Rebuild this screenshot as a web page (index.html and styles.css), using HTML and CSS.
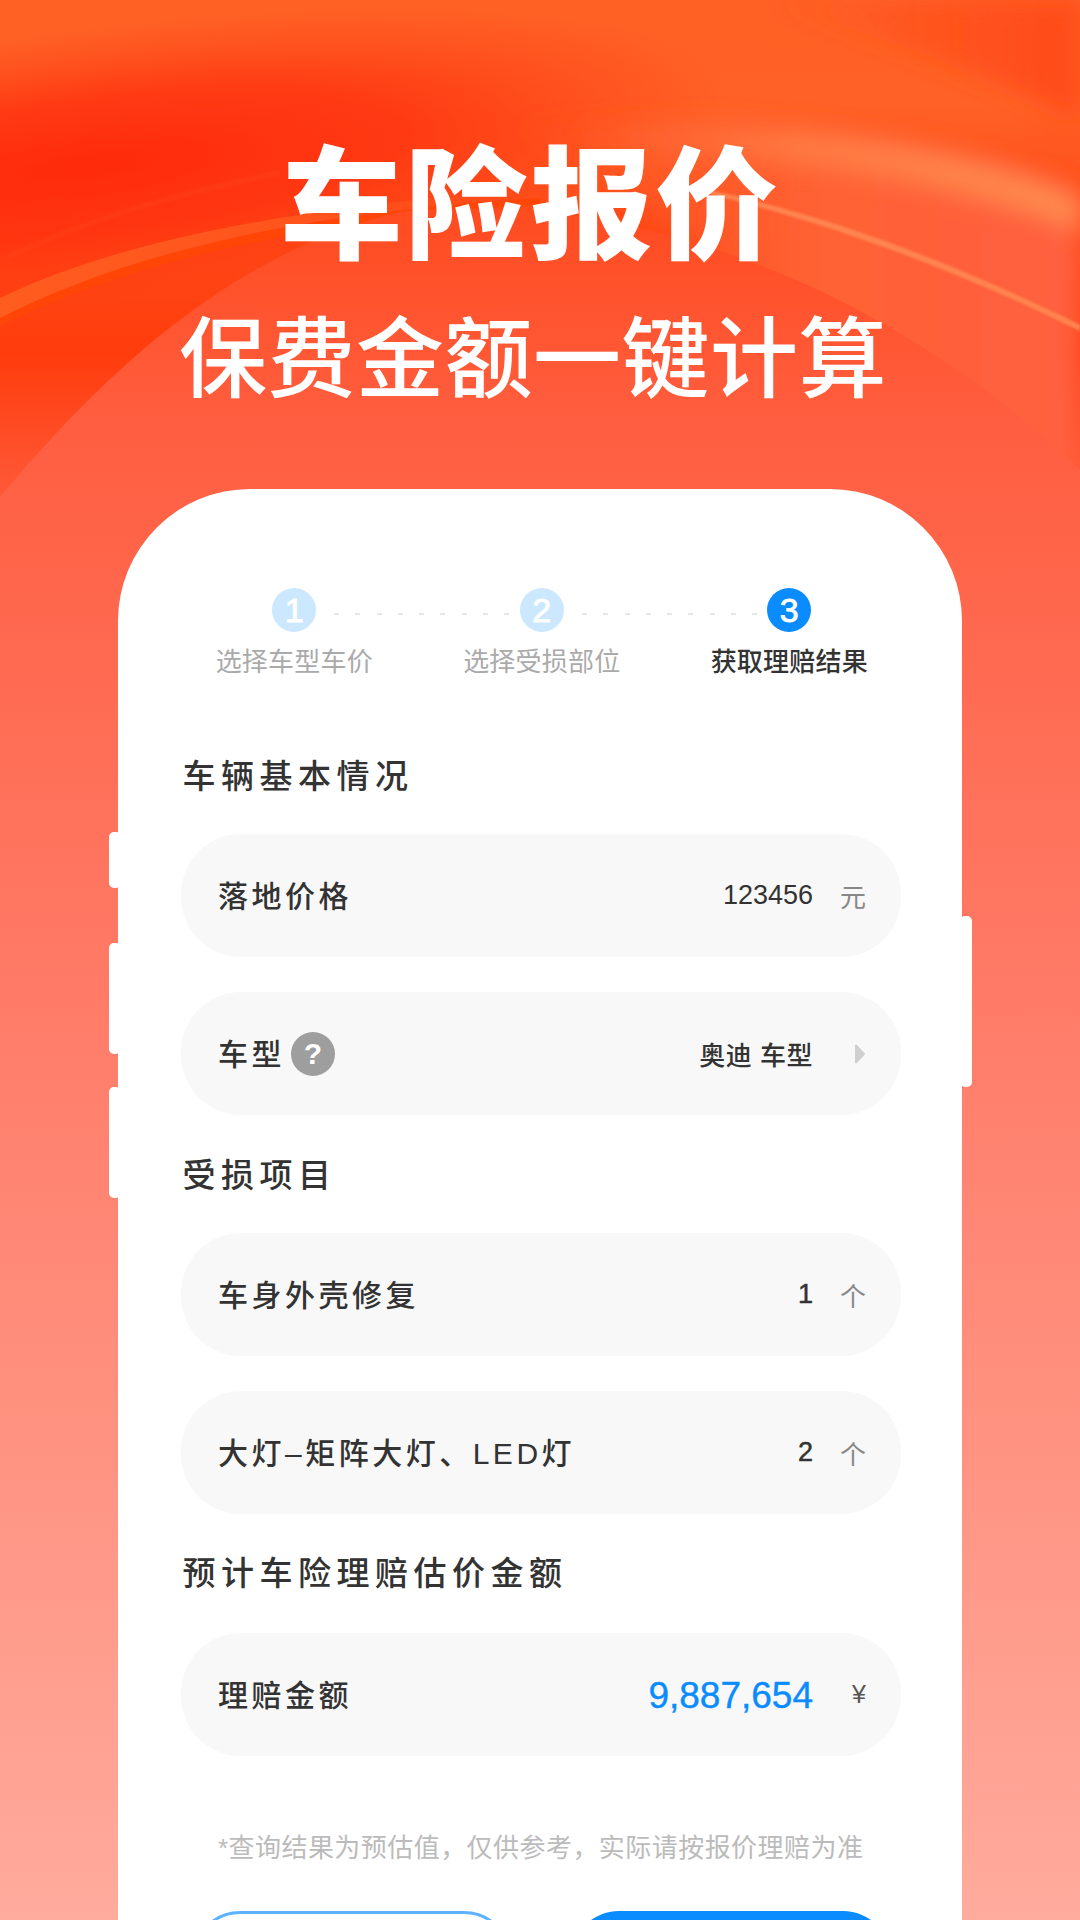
FILE: index.html
```html
<!DOCTYPE html>
<html lang="zh-CN">
<head>
<meta charset="utf-8">
<title>车险报价</title>
<link rel="stylesheet" href="styles.css">
</head>
<body>
<div class="page">
  <svg class="backdrop" viewBox="0 0 1080 1920" preserveAspectRatio="none" aria-hidden="true">
    <defs>
      <linearGradient id="top" x1="0" y1="0" x2="0" y2="520" gradientUnits="userSpaceOnUse">
        <stop offset="0" stop-color="#ff6024"/>
        <stop offset=".2" stop-color="#ff6126"/>
        <stop offset=".42" stop-color="#ff4a18"/>
        <stop offset=".68" stop-color="#ff3c0c"/>
        <stop offset="1" stop-color="#ff5e40"/>
      </linearGradient>
      <radialGradient id="red" cx="0" cy="0" r="1" gradientUnits="userSpaceOnUse" gradientTransform="translate(90 165) rotate(-7) scale(640 135)">
        <stop offset="0" stop-color="#ff2a0a"/>
        <stop offset=".5" stop-color="#ff2f0e" stop-opacity=".75"/>
        <stop offset="1" stop-color="#ff3a10" stop-opacity="0"/>
      </radialGradient>
      <linearGradient id="corner" x1="760" y1="0" x2="1080" y2="0" gradientUnits="userSpaceOnUse">
        <stop offset="0" stop-color="#ff4a18" stop-opacity="0"/>
        <stop offset="1" stop-color="#ff4a18"/>
      </linearGradient>
      <linearGradient id="sheen" x1="560" y1="0" x2="1080" y2="0" gradientUnits="userSpaceOnUse">
        <stop offset="0" stop-color="#ff6a38" stop-opacity="0"/>
        <stop offset=".45" stop-color="#ff7a42"/>
        <stop offset="1" stop-color="#ff8c50"/>
      </linearGradient>
      <linearGradient id="under" x1="560" y1="0" x2="1080" y2="0" gradientUnits="userSpaceOnUse">
        <stop offset="0" stop-color="#ff5a28" stop-opacity=".2"/>
        <stop offset=".5" stop-color="#ff6234"/>
        <stop offset="1" stop-color="#ff6040"/>
      </linearGradient>
      <linearGradient id="band" x1="0" y1="0" x2="540" y2="0" gradientUnits="userSpaceOnUse">
        <stop offset="0" stop-color="#ff5c20"/>
        <stop offset=".6" stop-color="#ff541c"/>
        <stop offset="1" stop-color="#ff541c" stop-opacity="0"/>
      </linearGradient>
      <linearGradient id="dome" x1="0" y1="200" x2="0" y2="1920" gradientUnits="userSpaceOnUse">
        <stop offset="0" stop-color="#ff4a1e"/>
        <stop offset=".13" stop-color="#ff5e40"/>
        <stop offset=".45" stop-color="#ff7a66"/>
        <stop offset=".75" stop-color="#ff9584"/>
        <stop offset="1" stop-color="#ffab9d"/>
      </linearGradient>
      <filter id="soft" x="-20%" y="-40%" width="140%" height="180%"><feGaussianBlur stdDeviation="12"/></filter>
      <filter id="softer" x="-5%" y="-20%" width="110%" height="140%"><feGaussianBlur stdDeviation="1.2"/></filter>
    </defs>
    <rect width="1080" height="1920" fill="url(#top)"/>
    <rect width="1080" height="360" fill="url(#red)"/>
    <path d="M760 0H1080V120C980 70 860 30 760 0Z" fill="url(#corner)" filter="url(#soft)"/>
    <path d="M520 128C700 108 950 130 1080 195V560L640 200Z" fill="url(#under)" filter="url(#soft)"/>
    <path d="M560 128C750 116 950 140 1080 198V232C960 185 780 150 620 155Z" fill="url(#sheen)" filter="url(#soft)"/>
    <path d="M700 188C830 215 960 265 1080 325V331C960 272 830 222 700 192Z" fill="#ff8450" filter="url(#softer)"/>
    <path d="M0 258C90 215 180 190 280 170L280 176C180 196 90 220 0 264Z" fill="#ff4a1e" opacity=".3" filter="url(#softer)"/>
    <path d="M0 318C130 250 300 215 540 198V204C300 222 130 262 0 326Z" fill="#ff4606"/>
    <path d="M0 298C120 240 300 205 540 190V197C300 213 130 252 0 318Z" fill="url(#band)"/>
    <path d="M0 497C90 390 220 255 400 212C610 190 870 270 1080 470V1920H0Z" fill="url(#dome)"/>
  </svg>

  <header class="hero">
    <h1 class="hero-title">车险报价</h1>
    <p class="hero-sub">保费金额一键计算</p>
  </header>

  <main class="card">
    <span class="tab tab-a"></span>
    <span class="tab tab-b"></span>
    <span class="tab tab-c"></span>
    <span class="tab tab-d"></span>

    <ol class="stepper">
      <li class="step"><span class="dot">1</span><span class="step-label">选择车型车价</span></li>
      <li class="step"><span class="link"></span><span class="dot">2</span><span class="step-label">选择受损部位</span></li>
      <li class="step is-current"><span class="link"></span><span class="dot">3</span><span class="step-label">获取理赔结果</span></li>
    </ol>

    <h2 class="section section-first">车辆基本情况</h2>
    <div class="row">
      <span class="row-label">落地价格</span>
      <span class="row-value">123456</span>
      <span class="row-unit">元</span>
    </div>
    <div class="row row-next">
      <span class="row-label">车型</span>
      <span class="help">?</span>
      <span class="row-value row-value-cjk">奥迪 车型</span>
      <span class="row-unit">
        <svg class="caret" viewBox="0 0 10 18" aria-hidden="true"><path d="M1.5 1.5 8.5 9 1.5 16.500Z" fill="#cfcfcf" stroke="#cfcfcf" stroke-width="2" stroke-linejoin="round"/></svg>
      </span>
    </div>

    <h2 class="section section-damage">受损项目</h2>
    <div class="row">
      <span class="row-label">车身外壳修复</span>
      <span class="row-value row-value-count">1</span>
      <span class="row-unit">个</span>
    </div>
    <div class="row row-next">
      <span class="row-label">大灯–矩阵大灯、LED灯</span>
      <span class="row-value row-value-count">2</span>
      <span class="row-unit">个</span>
    </div>

    <h2 class="section section-estimate">预计车险理赔估价金额</h2>
    <div class="row">
      <span class="row-label">理赔金额</span>
      <span class="row-value row-value-big">9,887,654</span>
      <span class="row-unit row-unit-yen">¥</span>
    </div>

    <p class="note">*查询结果为预估值，仅供参考，实际请按报价理赔为准</p>

    <div class="actions">
      <span class="btn btn-ghost"></span>
      <span class="btn btn-solid"></span>
    </div>
  </main>
</div>
</body>
</html>
```
FILE: styles.css
```css
* { box-sizing: border-box; }
html, body { margin: 0; padding: 0; }
body {
  font-family: "Liberation Sans", "Noto Sans CJK SC", sans-serif;
  color: #333;
}
.page {
  position: relative;
  width: 1080px;
  height: 1920px;
  overflow: hidden;
  background: #ff7a66;
}
.backdrop {
  position: absolute;
  left: 0;
  top: 0;
  width: 1080px;
  height: 1920px;
}
.hero {
  position: relative;
  padding-top: 142px;
  text-align: center;
  color: #fff;
}
.hero-title {
  margin: 0;
  padding-right: 19px;
  font-size: 122px;
  line-height: 130px;
  letter-spacing: 3px;
  font-weight: 900;
}
.hero-sub {
  margin: 40px 0 0;
  padding-right: 14px;
  font-size: 88px;
  line-height: 96px;
  letter-spacing: .5px;
  font-weight: 500;
}
.card {
  position: relative;
  width: 844px;
  height: 1500px;
  margin: 81px 0 0 118px;
  padding: 99px 61px 0 63px;
  background: #fff;
  border-radius: 132px 132px 0 0;
}
.tab {
  position: absolute;
  width: 12px;
  background: #fff;
  border-radius: 5px;
}
.tab-a { left: -9px; top: 343px; height: 56px; }
.tab-b { left: -9px; top: 454px; height: 111px; }
.tab-c { left: -9px; top: 598px; height: 111px; }
.tab-d { right: -10px; top: 427px; height: 171px; }

.stepper {
  list-style: none;
  display: grid;
  grid-template-columns: repeat(3, 247.500px);
  margin: 0 0 0 -10.500px;
  padding: 0;
}
.step {
  position: relative;
  display: flex;
  flex-direction: column;
  align-items: center;
}
.dot {
  width: 44px;
  height: 44px;
  border-radius: 50%;
  background: #cce8ff;
  color: #fff;
  font-size: 34px;
  line-height: 44px;
  text-align: center;
  -webkit-text-stroke: .8px #fff;
}
.is-current .dot { background: #0a8cff; }
.link {
  position: absolute;
  left: -84px;
  top: 25px;
  width: 175px;
  height: 2px;
  background: repeating-linear-gradient(90deg, #e6e6e6 0 5px, transparent 5px 21.300px);
}
.step-label {
  margin-top: 12px;
  font-size: 26px;
  line-height: 36px;
  letter-spacing: .2px;
  color: #aaa;
}
.is-current .step-label { color: #333; font-weight: 500; }

.section {
  margin: 0;
  padding-left: 1.500px;
  font-size: 33px;
  line-height: 40px;
  letter-spacing: 5.500px;
  font-weight: 500;
  color: #333;
}
.section-first { margin: 77px 0 37px; }
.section-damage { margin: 41px 0 37px; }
.section-estimate { margin: 40px 0 39px; }

.row {
  display: flex;
  align-items: center;
  height: 123px;
  padding: 0 35px 0 37px;
  background: #f8f8f8;
  border-radius: 60px;
}
.row-next { margin-top: 35px; }
.row-label {
  padding-bottom: 3px;
  font-size: 30px;
  letter-spacing: 3.500px;
  font-weight: 500;
  color: #333;
}
.help {
  width: 44px;
  height: 44px;
  margin-left: 6px;
  border-radius: 50%;
  background: #9e9e9e;
  color: #fff;
  font-size: 30px;
  line-height: 44px;
  text-align: center;
  font-weight: 700;
}
.row-value {
  margin-left: auto;
  font-size: 27px;
  color: #333;
}
.row-value-cjk { font-size: 26px; letter-spacing: .5px; font-weight: 500; }
.row-value-count { -webkit-text-stroke: .5px #333; }
.row-value-big { padding-top: 2px; font-size: 37px; color: #0a8cff; -webkit-text-stroke: .4px #0a8cff; }
.row-unit {
  display: flex;
  justify-content: flex-end;
  align-items: center;
  width: 26px;
  margin-left: 27px;
  font-size: 26px;
  color: #888;
}
.row-unit-yen { font-size: 25px; color: #555; }
.caret { width: 12px; height: 20px; }

.note {
  margin: 74px 0 0;
  padding-left: 37px;
  font-size: 26px;
  line-height: 36px;
  letter-spacing: .45px;
  color: #bbb;
}
.actions {
  display: flex;
  justify-content: space-between;
  margin: 45px 10px 0 11px;
}
.btn {
  display: block;
  width: 320px;
  height: 96px;
  border-radius: 48px;
}
.btn-ghost { border: 3px solid #5cb2ff; background: #fff; }
.btn-solid { background: #0a8cff; }
```
